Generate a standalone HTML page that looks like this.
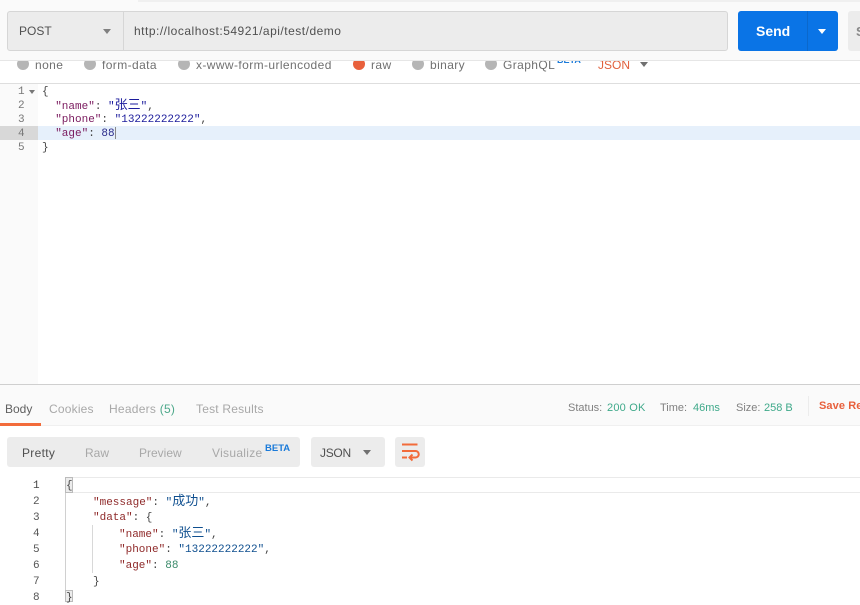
<!DOCTYPE html>
<html><head><meta charset="utf-8"><style>
*{box-sizing:border-box}
html,body{margin:0;padding:0;background:#fff}
body{width:860px;height:602px;position:relative;overflow:hidden;font-family:"Liberation Sans","Noto Sans CJK SC",sans-serif;font-size:12px;color:#808080}
.a{position:absolute;white-space:nowrap}
.m{font-family:"Liberation Mono","Noto Sans CJK SC",monospace;font-size:11px;white-space:pre;position:absolute;line-height:14px}
.c{font-size:13px;line-height:14px}
.k{color:#7a1a5e}.s{color:#1c1c9c}.n{color:#2a2a8a}.p{color:#444}
.k2{color:#8f2a2a}.s2{color:#0f4f8f}.n2{color:#3a8a6a}
.ln{font-family:"Liberation Mono",monospace;font-size:11px;position:absolute;color:#777;line-height:14px}
.dot{position:absolute;width:12px;height:12px;border-radius:50%;background:#b5b5b5;top:58px}
.rt{position:absolute;top:57px;line-height:16px;font-size:12px;color:#707070;letter-spacing:.4px;white-space:nowrap}
</style></head><body>
<!-- params row (clipped by top bar) -->
<div class="dot" style="left:17px"></div><div class="rt" style="left:35px">none</div>
<div class="dot" style="left:84px"></div><div class="rt" style="left:102px">form-data</div>
<div class="dot" style="left:178px"></div><div class="rt" style="left:196px">x-www-form-urlencoded</div>
<div class="dot" style="left:353px;background:#e8603c"></div><div class="rt" style="left:371px">raw</div>
<div class="dot" style="left:412px"></div><div class="rt" style="left:430px">binary</div>
<div class="dot" style="left:485px"></div><div class="rt" style="left:503px">GraphQL</div>
<div class="a" style="left:557px;top:55px;font-size:9px;font-weight:bold;color:#1a7ad9;line-height:10px">BETA</div>
<div class="rt" style="left:598px;color:#e0603c;letter-spacing:0">JSON</div>
<div class="a" style="left:640px;top:62px;width:0;height:0;border-left:4px solid transparent;border-right:4px solid transparent;border-top:5px solid #707070"></div>
<!-- top bar -->
<div class="a" style="left:0;top:0;width:860px;height:61px;background:#fafafa;border-bottom:1px solid #e6e6e6"></div>
<div class="a" style="left:138px;top:0;width:722px;height:2px;background:#f0f0f0"></div>
<div class="a" style="left:7px;top:11px;width:721px;height:40px;background:#ececec;border:1px solid #d6d6d6;border-radius:3px"></div>
<div class="a" style="left:123px;top:12px;width:1px;height:38px;background:#d6d6d6"></div>
<div class="a" style="left:19px;top:24px;font-size:12px;color:#505050;line-height:15px">POST</div>
<div class="a" style="left:103px;top:29px;width:0;height:0;border-left:4px solid transparent;border-right:4px solid transparent;border-top:5px solid #808080"></div>
<div class="a" style="left:134px;top:24px;font-size:12px;color:#505050;line-height:15px;letter-spacing:.5px">http://localhost:54921/api/test/demo</div>
<div class="a" style="left:738px;top:11px;width:100px;height:40px;background:#0a74e6;border-radius:3px"></div>
<div class="a" style="left:807px;top:11px;width:1px;height:40px;background:#0b68cc"></div>
<div class="a" style="left:756px;top:23px;font-size:14px;font-weight:bold;color:#fff;line-height:17px">Send</div>
<div class="a" style="left:818px;top:29px;width:0;height:0;border-left:4px solid transparent;border-right:4px solid transparent;border-top:5px solid #fff"></div>
<div class="a" style="left:848px;top:11px;width:12px;height:40px;background:#ececec;border-radius:3px 0 0 3px"></div>
<div class="a" style="left:856px;top:24px;font-size:13px;font-weight:bold;color:#888;line-height:15px">S</div>
<!-- editor -->
<div class="a" style="left:0;top:83px;width:860px;height:1px;background:#dedede"></div>
<div class="a" style="left:0;top:84px;width:38px;height:300px;background:#fafafa"></div>
<div class="a" style="left:0;top:126px;width:38px;height:14px;background:#d8d8d8"></div>
<div class="a" style="left:38px;top:126px;width:822px;height:14px;background:#e6f0fb"></div>
<div class="ln" style="left:18px;top:85px">1</div>
<div class="a" style="left:29px;top:90px;width:0;height:0;border-left:3px solid transparent;border-right:3px solid transparent;border-top:4px solid #777"></div>
<div class="ln" style="left:18px;top:99px">2</div>
<div class="ln" style="left:18px;top:113px">3</div>
<div class="ln" style="left:18px;top:127px">4</div>
<div class="ln" style="left:18px;top:141px">5</div>
<div class="m p" style="left:42px;top:85px">{</div>
<div class="m p" style="left:42px;top:99px">  <span class="k">"name"</span>: <span class="s">"<span class="c">张三</span>"</span>,</div>
<div class="m p" style="left:42px;top:113px">  <span class="k">"phone"</span>: <span class="s">"13222222222"</span>,</div>
<div class="m p" style="left:42px;top:127px">  <span class="k">"age"</span>: <span class="n">88</span></div>
<div class="a" style="left:115px;top:127px;width:1px;height:12px;background:#888"></div>
<div class="m p" style="left:42px;top:141px">}</div>
<!-- response tabs -->
<div class="a" style="left:0;top:384px;width:860px;height:1px;background:#cfcfcf"></div>
<div class="a" style="left:0;top:385px;width:860px;height:41px;background:#fafafa;border-bottom:1px solid #f0f0f0"></div>
<div class="a" style="left:5px;top:401px;color:#606060;line-height:16px">Body</div>
<div class="a" style="left:0;top:423px;width:41px;height:3px;background:#f26b3a"></div>
<div class="a" style="left:49px;top:401px;color:#a8a8a8;line-height:16px;letter-spacing:.2px">Cookies</div>
<div class="a" style="left:109px;top:401px;color:#a8a8a8;line-height:16px;letter-spacing:.25px">Headers <span style="color:#4ca88a">(5)</span></div>
<div class="a" style="left:196px;top:401px;color:#a8a8a8;line-height:16px;letter-spacing:.2px">Test Results</div>
<div class="a" style="left:568px;top:401px;font-size:11px;color:#808080;line-height:14px">Status:</div>
<div class="a" style="left:607px;top:401px;font-size:11px;color:#3fa98a;line-height:14px;letter-spacing:.2px">200 OK</div>
<div class="a" style="left:660px;top:401px;font-size:11px;color:#808080;line-height:14px">Time:</div>
<div class="a" style="left:693px;top:401px;font-size:11px;color:#3fa98a;line-height:14px">46ms</div>
<div class="a" style="left:736px;top:401px;font-size:11px;color:#808080;line-height:14px">Size:</div>
<div class="a" style="left:764px;top:401px;font-size:11px;color:#3fa98a;line-height:14px">258 B</div>
<div class="a" style="left:808px;top:396px;width:1px;height:20px;background:#ececec"></div>
<div class="a" style="left:819px;top:399px;font-size:11px;font-weight:bold;color:#e8603c;line-height:14px;letter-spacing:.1px">Save Response</div>
<!-- toolbar -->
<div class="a" style="left:7px;top:437px;width:293px;height:30px;background:#ececec;border-radius:3px"></div>
<div class="a" style="left:22px;top:445px;color:#505050;line-height:16px;letter-spacing:.3px">Pretty</div>
<div class="a" style="left:85px;top:445px;color:#a8a8a8;line-height:16px">Raw</div>
<div class="a" style="left:139px;top:445px;color:#a8a8a8;line-height:16px">Preview</div>
<div class="a" style="left:212px;top:445px;color:#a8a8a8;line-height:16px;letter-spacing:.3px">Visualize</div>
<div class="a" style="left:265px;top:443px;font-size:9.5px;font-weight:bold;color:#1a7ad9;line-height:12px">BETA</div>
<div class="a" style="left:311px;top:437px;width:74px;height:30px;background:#ececec;border-radius:3px"></div>
<div class="a" style="left:320px;top:445px;color:#505050;line-height:16px;letter-spacing:-.3px">JSON</div>
<div class="a" style="left:363px;top:450px;width:0;height:0;border-left:4px solid transparent;border-right:4px solid transparent;border-top:5px solid #707070"></div>
<div class="a" style="left:395px;top:437px;width:30px;height:30px;background:#ececec;border-radius:3px"></div>
<svg class="a" style="left:395px;top:437px" width="30" height="30" viewBox="0 0 30 30" fill="none" stroke="#f26b3a" stroke-width="2"><path d="M7 7.5H22.5M7 14H20.5a3 3 0 0 1 0 6.5H15M17.5 17.5L14.5 20.5l3 3M7 20.5H12"/></svg>
<!-- response code -->
<div class="a" style="left:65px;top:477px;width:795px;height:16px;border-top:1px solid #eaeaea;border-bottom:1px solid #eaeaea"></div>
<div class="a" style="left:65px;top:477px;width:8px;height:16px;background:#ececec;border:1px solid #bbb"></div>
<div class="a" style="left:65px;top:493px;width:1px;height:102px;background:#d0d0d0"></div>
<div class="a" style="left:92px;top:525px;width:1px;height:48px;background:#d8d8d8"></div>
<div class="a" style="left:65px;top:590px;width:8px;height:12px;background:#ececec;border:1px solid #bbb"></div>
<div class="ln" style="left:33px;top:479px;color:#444">1</div>
<div class="ln" style="left:33px;top:495px;color:#555">2</div>
<div class="ln" style="left:33px;top:511px;color:#555">3</div>
<div class="ln" style="left:33px;top:527px;color:#555">4</div>
<div class="ln" style="left:33px;top:543px;color:#555">5</div>
<div class="ln" style="left:33px;top:559px;color:#555">6</div>
<div class="ln" style="left:33px;top:575px;color:#555">7</div>
<div class="ln" style="left:33px;top:591px;color:#555">8</div>
<div class="m p" style="left:66px;top:479px">{</div>
<div class="m p" style="left:93px;top:495px"><span class="k2">"message"</span>: <span class="s2">"<span class="c">成功</span>"</span>,</div>
<div class="m p" style="left:93px;top:511px"><span class="k2">"data"</span>: {</div>
<div class="m p" style="left:119px;top:527px"><span class="k2">"name"</span>: <span class="s2">"<span class="c">张三</span>"</span>,</div>
<div class="m p" style="left:119px;top:543px"><span class="k2">"phone"</span>: <span class="s2">"13222222222"</span>,</div>
<div class="m p" style="left:119px;top:559px"><span class="k2">"age"</span>: <span class="n2">88</span></div>
<div class="m p" style="left:93px;top:575px">}</div>
<div class="m p" style="left:66px;top:591px">}</div>
</body></html>
